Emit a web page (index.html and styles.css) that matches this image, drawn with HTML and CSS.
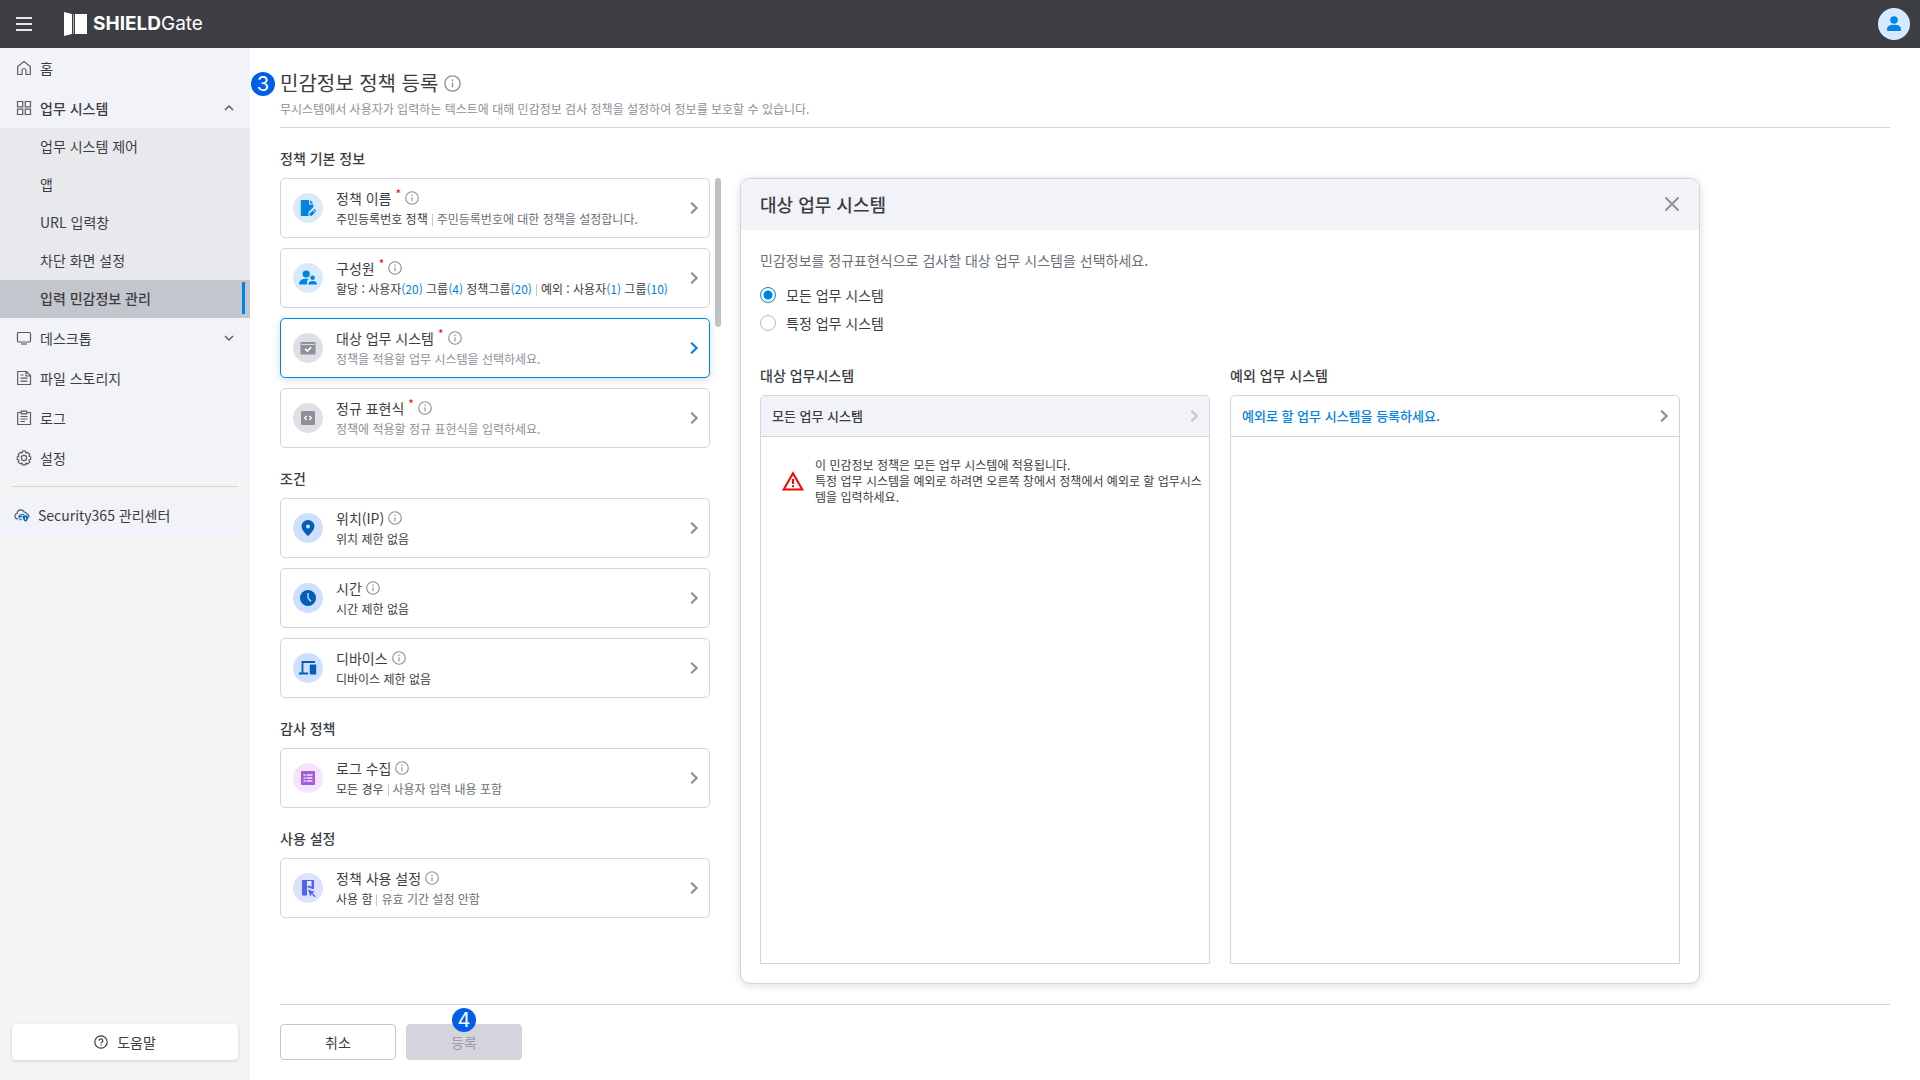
FILE: index.html
```html
<!DOCTYPE html>
<html lang="ko">
<head>
<meta charset="utf-8">
<meta name="viewport" content="width=device-width, initial-scale=1">
<title>SHIELDGate - 민감정보 정책 등록</title>
<link rel="stylesheet" href="styles.css">
</head>
<body>
<svg class="sprite" aria-hidden="true">
  <symbol id="i-info" viewBox="0 0 16 16"><circle cx="8" cy="8" r="7.2" fill="none" stroke="currentColor" stroke-width="1.3"/><path d="M8 7v4.6" stroke="currentColor" stroke-width="1.3"/><circle cx="8" cy="4.8" r=".9" fill="currentColor"/></symbol>
  <symbol id="i-next" viewBox="0 0 12 12"><path d="M3.2 .8L8.600 6l-5.400 5.200" fill="none" stroke="currentColor" stroke-width="2.2"/></symbol>
</svg>

<header class="topbar">
  <button class="menu-btn" type="button" aria-label="메뉴">
    <svg width="16" height="14" viewBox="0 0 16 14"><path d="M0 1h16M0 7h16M0 13h16" stroke="#e4e5e8" stroke-width="2"/></svg>
  </button>
  <a class="logo" href="#">
    <svg width="24" height="24" viewBox="0 0 24 24"><path d="M0 0l8 2v20l-8 2z" fill="#fff"/><path d="M9 2h1v20H9z" fill="#a9abb0"/><path d="M11 2h12v20H11z" fill="#fff"/></svg>
    <span class="logo-text"><b>SHIELD</b>Gate</span>
  </a>
  <button class="avatar" type="button" aria-label="내 계정">
    <svg width="16" height="16" viewBox="0 0 16 16" fill="#0083e6"><circle cx="8" cy="4" r="3.8"/><path d="M1 14c-.3-4 3-5.300 7-5.300s7.300 1.300 7 5.300c0 .7-.4 1-1 1H2c-.6 0-1-.3-1-1z"/></svg>
  </button>
</header>

<div class="shell">
  <aside class="sidebar">
    <nav class="menu">
      <a class="item" href="#"><svg class="ico" viewBox="0 0 16 16"><path d="M1.700 6.500L8 1.500l6.300 5V14.500H10V10.500a2 2 0 0 0-4 0v4H1.700z"/></svg>홈</a>
      <button class="item open" type="button" aria-expanded="true"><svg class="ico" viewBox="0 0 16 16"><path d="M1.500 1.500h5.300v5.300H1.500zM9.200 1.500h5.300v5.300H9.200zM1.500 9.200h5.300v5.300H1.500zM9.200 9.200h5.300v5.300H9.200z"/></svg>업무 시스템<svg class="fold" viewBox="0 0 10 10"><path d="M1 7l4-4 4 4"/></svg></button>
      <div class="submenu">
        <a href="#">업무 시스템 제어</a>
        <a href="#">앱</a>
        <a href="#">URL 입력창</a>
        <a href="#">차단 화면 설정</a>
        <a class="current" href="#" aria-current="page">입력 민감정보 관리</a>
      </div>
      <button class="item" type="button" aria-expanded="false"><svg class="ico" viewBox="0 0 16 16"><rect x="1.500" y="2.500" width="13" height="9.500" rx="1"/><path d="M5 14h6"/></svg>데스크톱<svg class="fold" viewBox="0 0 10 10"><path d="M1 3l4 4 4-4"/></svg></button>
      <a class="item" href="#"><svg class="ico" viewBox="0 0 16 16"><path d="M1.700 1.500H10.500L14.500 5.500V14.500H1.700zM10 1.500V6h4.500M4.500 5h3M4.500 8.200h7M4.500 11.200h7"/></svg>파일 스토리지</a>
      <a class="item" href="#"><svg class="ico" viewBox="0 0 16 16"><path d="M5 2.500H1.700v12h12.800v-12H11M5.200 1.200h5.600v2.600H5.200zM4.500 6.500h7M4.500 9h7M4.500 11.500h4.500"/></svg>로그</a>
      <a class="item" href="#"><svg class="ico" viewBox="0 0 16 16"><circle cx="8" cy="8" r="2.600"/><path d="M6.500 1.200h3l.5 1.800 1.800-.6 2 2.100-.8 1.700 1.700.6v2.400l-1.700.8.7 1.800-2 2.100-1.700-.8-.6 1.700H6.500L6 13.100l-1.800.8-2-2.100.8-1.700-1.700-.6V6.900L3 6.200l-.8-1.700 2-2.100L6 3z"/></svg>설정</a>
    </nav>
    <hr class="menu-line">
    <a class="center-link" href="#"><svg width="16" height="16" viewBox="0 0 16 16" fill="none"><path d="M4 11.800H3a2.700 2.700 0 0 1 .2-5.300A3.600 3.600 0 0 1 10 4.800a3 3 0 0 1 2.800 2.300 2.400 2.400 0 0 1 1.900 3.500" stroke="#4d5f7c" stroke-width="1.200"/><path d="M4.500 9.800c1.500-2.600 4-3 6-1.500M4.800 11.600c1-2 2.500-2.500 4-1.800M5.500 13.300c.6-1 1.300-1.400 2.200-1.200" stroke="#0a6fc7" stroke-width="1.200"/><path d="M8.800 9.200l2.700-.9 2.700.9c.2 2.800-.8 4.600-2.700 5.500-1.900-.9-2.900-2.700-2.700-5.500z" fill="#0a6fc7"/><path d="M11.500 10.500v2.200" stroke="#fff"/></svg>Security365 관리센터</a>
    <button class="help" type="button"><svg width="14" height="14" viewBox="0 0 14 14" fill="none" stroke="#3c3d42" stroke-width="1.200"><circle cx="7" cy="7" r="6.200"/><path d="M5.200 5.700a1.800 1.800 0 1 1 2.600 1.600c-.6.300-.8.600-.8 1.200M7 9.600v1.200"/></svg>도움말</button>
  </aside>

  <main class="main">
    <header class="page-head">
      <h1>민감정보 정책 등록 <svg class="info-lg"><use href="#i-info"/></svg></h1>
      <p>무시스템에서 사용자가 입력하는 텍스트에 대해 민감정보 검사 정책을 설정하여 정보를 보호할 수 있습니다.</p>
      <span class="step step-title">3</span>
    </header>

    <div class="work">
      <div class="policy">
        <section>
          <h2>정책 기본 정보</h2>
          <button class="card" type="button">
            <span class="disc sky"><svg width="16" height="16" viewBox="0 0 16 16" fill="#0083e6"><path d="M1.500 0H9v4.500h4.300v2.800L8.500 12v4H1.500A1 1 0 0 1 .8 15.300V.7A1 1 0 0 1 1.500 0z"/><path d="M10 0l3.300 3.500H10zM9.600 15.800v-2.200l3.200-3.200 2.200 2.200-3.200 3.200zM13.500 9.700l.9-.9 2.200 2.200-.9.9z"/></svg></span>
            <span class="text"><span class="name">정책 이름<i>*</i><svg class="info"><use href="#i-info"/></svg></span>
            <span class="desc"><span>주민등록번호 정책</span><span class="soft">주민등록번호에 대한 정책을 설정합니다.</span></span></span>
            <svg class="next"><use href="#i-next"/></svg>
          </button>
          <button class="card" type="button">
            <span class="disc sky"><svg width="18" height="18" viewBox="0 0 18 18" fill="#0083e6"><circle cx="7.200" cy="5" r="3.600"/><path d="M0 15.500c0-4 3-5.800 7-5.800 1 0 1.800.1 2.500.3-1.300 1-1.800 2.800-1.500 5.500z"/><circle cx="13.600" cy="8.800" r="2.300"/><path d="M9.200 15.500c0-2.600 1.800-3.600 4.400-3.600s4.400 1 4.400 3.600z"/></svg></span>
            <span class="text"><span class="name">구성원<i>*</i><svg class="info"><use href="#i-info"/></svg></span>
            <span class="desc"><span>할당 : 사용자<em>(20)</em> 그룹<em>(4)</em> 정책그룹<em>(20)</em></span><span>예외 : 사용자<em>(1)</em> 그룹<em>(10)</em></span></span></span>
            <svg class="next"><use href="#i-next"/></svg>
          </button>
          <button class="card active" type="button">
            <span class="disc gray"><svg width="16" height="16" viewBox="0 0 16 16"><path d="M1.500 2h13a1 1 0 0 1 1 1v10.500a1 1 0 0 1-1 1h-13a1 1 0 0 1-1-1V3a1 1 0 0 1 1-1z" fill="#8d9099"/><path d="M1.500 4.400h13" stroke="#dfe0e4"/><path d="M5 8.800l2.300 2.300 4-4" fill="none" stroke="#fff" stroke-width="1.500"/></svg></span>
            <span class="text"><span class="name">대상 업무 시스템<i>*</i><svg class="info"><use href="#i-info"/></svg></span>
            <span class="desc"><span class="faint">정책을 적용할 업무 시스템을 선택하세요.</span></span></span>
            <svg class="next"><use href="#i-next"/></svg>
          </button>
          <button class="card" type="button">
            <span class="disc gray"><svg width="14" height="14" viewBox="0 0 14 14"><rect width="14" height="14" rx="1" fill="#8d9099"/><path d="M5.600 5L3.600 7l2 2M8.400 5l2 2-2 2" fill="none" stroke="#fff" stroke-width="1.200"/></svg></span>
            <span class="text"><span class="name">정규 표현식<i>*</i><svg class="info"><use href="#i-info"/></svg></span>
            <span class="desc"><span class="faint">정책에 적용할 정규 표현식을 입력하세요.</span></span></span>
            <svg class="next"><use href="#i-next"/></svg>
          </button>
        </section>

        <section>
          <h2>조건</h2>
          <button class="card" type="button">
            <span class="disc blue"><svg width="16" height="16" viewBox="0 0 16 16"><path d="M8 0a6.400 6.400 0 0 1 6.400 6.400C14.400 10.500 8 16 8 16S1.600 10.500 1.600 6.400A6.400 6.400 0 0 1 8 0z" fill="#005fb8"/><circle cx="8" cy="6.500" r="2" fill="#cfe0ff"/></svg></span>
            <span class="text"><span class="name">위치(IP)<svg class="info"><use href="#i-info"/></svg></span>
            <span class="desc"><span>위치 제한 없음</span></span></span>
            <svg class="next"><use href="#i-next"/></svg>
          </button>
          <button class="card" type="button">
            <span class="disc blue"><svg width="16" height="16" viewBox="0 0 16 16"><circle cx="8" cy="8" r="8" fill="#005fb8"/><path d="M8 3v5l3 3.500" fill="none" stroke="#cfe0ff" stroke-width="1.300"/></svg></span>
            <span class="text"><span class="name">시간<svg class="info"><use href="#i-info"/></svg></span>
            <span class="desc"><span>시간 제한 없음</span></span></span>
            <svg class="next"><use href="#i-next"/></svg>
          </button>
          <button class="card" type="button">
            <span class="disc blue"><svg width="18" height="16" viewBox="0 0 18 16"><path d="M16 2H3.500v11.500M0 13.500h9" fill="none" stroke="#005fb8" stroke-width="1.800"/><rect x="10.800" y="4.500" width="6.400" height="10" rx=".6" fill="#005fb8"/></svg></span>
            <span class="text"><span class="name">디바이스<svg class="info"><use href="#i-info"/></svg></span>
            <span class="desc"><span>디바이스 제한 없음</span></span></span>
            <svg class="next"><use href="#i-next"/></svg>
          </button>
        </section>

        <section>
          <h2>감사 정책</h2>
          <button class="card" type="button">
            <span class="disc pink"><svg width="14" height="14" viewBox="0 0 14 14"><rect width="14" height="14" rx="1" fill="#a35bd6"/><path d="M2.500 4h2M2.500 7h2M2.500 10h2M5.500 4h6M5.500 7h6M5.500 10h6" stroke="#f5e4ff" stroke-width="1.300"/></svg></span>
            <span class="text"><span class="name">로그 수집<svg class="info"><use href="#i-info"/></svg></span>
            <span class="desc"><span>모든 경우</span><span class="soft">사용자 입력 내용 포함</span></span></span>
            <svg class="next"><use href="#i-next"/></svg>
          </button>
        </section>

        <section>
          <h2>사용 설정</h2>
          <button class="card" type="button">
            <span class="disc violet"><svg width="16" height="18" viewBox="0 0 16 18"><path d="M3 1h10a1 1 0 0 1 1 1v8.500L7 8v8.500H3a1 1 0 0 1-1-1V2a1 1 0 0 1 1-1z" fill="#4f63ee"/><path d="M7 2h4.500v6L9.200 6.200 7 8z" fill="#e8ecff"/><path d="M8 10.500l7 2.400-2.600 1.200 3.300 3.200-1 1-3.200-3.200-1.200 2.400z" fill="#4f63ee"/></svg></span>
            <span class="text"><span class="name">정책 사용 설정<svg class="info"><use href="#i-info"/></svg></span>
            <span class="desc"><span>사용 함</span><span class="soft">유효 기간 설정 안함</span></span></span>
            <svg class="next"><use href="#i-next"/></svg>
          </button>
        </section>
      </div>
      <div class="track"><div class="thumb"></div></div>

      <section class="panel">
        <header class="panel-head">
          <h2>대상 업무 시스템</h2>
          <button class="close" type="button" aria-label="닫기"><svg width="14" height="14" viewBox="0 0 14 14"><path d="M1 1l12 12M13 1L1 13" stroke="#8d9099" stroke-width="2" stroke-linecap="round"/></svg></button>
        </header>
        <div class="panel-body">
          <fieldset class="choice">
            <legend>민감정보를 정규표현식으로 검사할 대상 업무 시스템을 선택하세요.</legend>
            <label><input type="radio" name="target" checked>모든 업무 시스템</label>
            <label><input type="radio" name="target">특정 업무 시스템</label>
          </fieldset>
          <div class="lists">
            <div class="list">
              <h3>대상 업무시스템</h3>
              <div class="box">
                <button class="box-head" type="button" disabled>모든 업무 시스템<svg class="next"><use href="#i-next"/></svg></button>
                <div class="notice">
                  <svg width="22" height="20" viewBox="0 0 22 20"><path d="M11 2.200L20.300 18.500H1.700z" fill="none" stroke="#f00" stroke-width="2"/><path d="M11 8v5M11 14.200v2" stroke="#f00" stroke-width="2"/></svg>
                  <p>이 민감정보 정책은 모든 업무 시스템에 적용됩니다.<br>특정 업무 시스템을 예외로 하려면 오른쪽 창에서 정책에서 예외로 할 업무시스템을 입력하세요.</p>
                </div>
              </div>
            </div>
            <div class="list">
              <h3>예외 업무 시스템</h3>
              <div class="box">
                <button class="box-head add" type="button">예외로 할 업무 시스템을 등록하세요.<svg class="next"><use href="#i-next"/></svg></button>
              </div>
            </div>
          </div>
        </div>
      </section>
    </div>

    <footer class="actions">
      <button class="btn" type="button">취소</button>
      <div class="btn-wrap">
        <button class="btn" type="submit" disabled>등록</button>
        <span class="step step-submit">4</span>
      </div>
    </footer>
  </main>
</div>
</body>
</html>
```
FILE: styles.css
```css
* { box-sizing: border-box; }

body {
  margin: 0;
  min-height: 100vh;
  display: flex;
  flex-direction: column;
  font-family: "Noto Sans CJK KR", "Noto Sans", sans-serif;
  font-size: 14px;
  line-height: 20px;
  color: #3c3d42;
  background: #fff;
}

h1, h2, h3, p { margin: 0; }
button { font: inherit; color: inherit; border: 0; padding: 0; background: none; text-align: left; }
a { color: inherit; text-decoration: none; }
svg { display: block; flex: none; }
.sprite { position: absolute; width: 0; height: 0; }

/* top bar */
.topbar {
  height: 48px;
  display: flex;
  align-items: center;
  padding: 0 10px 0 16px;
  background: #3c3e43;
}
.logo { display: flex; align-items: center; gap: 5px; margin-left: 32px; }
.logo-text { font-family: Inter, sans-serif; font-size: 19px; color: #fff; }
.logo-text b { font-weight: 700; }
.avatar {
  width: 32px;
  height: 32px;
  margin-left: auto;
  display: grid;
  place-items: center;
  border-radius: 50%;
  background: #d6eaff;
}

.shell { flex: 1; display: flex; }

/* sidebar */
.sidebar {
  flex: none;
  width: 250px;
  display: flex;
  flex-direction: column;
  padding-bottom: 20px;
  background: #f4f4f4;
}
.menu { background: #f1f3f8; }
.item {
  width: 100%;
  height: 40px;
  display: flex;
  align-items: center;
  gap: 8px;
  padding: 0 16px;
}
.item.open { font-weight: 500; }
.ico { width: 16px; height: 16px; fill: none; stroke: #5b5d63; stroke-width: 1.2; }
.fold { width: 10px; height: 10px; margin-left: auto; fill: none; stroke: #5b5d63; stroke-width: 1.5; }
.submenu { background: #e8e9ed; }
.submenu a {
  height: 38px;
  display: flex;
  align-items: center;
  padding: 0 5px 2px 40px;
}
.submenu .current {
  justify-content: space-between;
  font-weight: 500;
  background: #c4c6cd;
}
.current::after { content: ""; width: 3px; height: 32px; background: #0083e6; }
.menu-line { width: auto; height: 1px; margin: 8px 12px; border: 0; background: #d3d4dc; }
.center-link {
  height: 40px;
  display: flex;
  align-items: center;
  gap: 8px;
  padding: 0 14px;
  background: #f1f3f8;
}
.help {
  height: 36px;
  margin: auto 12px 0;
  display: flex;
  align-items: center;
  justify-content: center;
  gap: 9px;
  border-radius: 4px;
  background: #fff;
  box-shadow: 0 1px 3px rgba(0, 0, 0, .15);
}

/* page */
.main {
  flex: 1;
  min-width: 0;
  display: flex;
  flex-direction: column;
  padding: 21px 30px 20px;
}
.page-head {
  position: relative;
  padding-bottom: 8px;
  border-bottom: 1px solid #d3d4d9;
}
.page-head h1 {
  display: flex;
  align-items: center;
  gap: 6px;
  margin-bottom: 2px;
  font-size: 20px;
  line-height: 28px;
  font-weight: 400;
}
.page-head p { font-size: 12px; color: #8d9099; }
.info-lg { width: 17px; height: 17px; color: #8d9099; }
.step {
  position: absolute;
  width: 24px;
  height: 24px;
  border-radius: 50%;
  background: #005ee9;
  color: #fff;
  font-family: Inter, sans-serif;
  font-size: 20px;
  line-height: 24px;
  text-align: center;
}
.step-title { left: -29px; top: 3px; }
.step-submit { left: 46px; top: -16px; }

.work { flex: 1; display: flex; padding-bottom: 20px; }
.policy { flex: 0 1 430px; }
.policy section { display: flex; flex-direction: column; gap: 10px; }
.policy h2 {
  padding-top: 20px;
  font-size: 14px;
  font-weight: 500;
}
.card {
  height: 60px;
  display: flex;
  align-items: center;
  padding: 0 9px 0 12px;
  border: 1px solid #d3d4dc;
  border-radius: 5px;
  background: #fff;
}
.card.active { border-color: #0083e6; box-shadow: 0 2px 8px rgba(60, 80, 160, .2); }
.disc {
  flex: none;
  width: 30px;
  height: 30px;
  margin-right: 13px;
  display: grid;
  place-items: center;
  border-radius: 50%;
}
.sky { background: #d9ebfb; }
.gray { background: #dfe0e4; }
.blue { background: #cfe0ff; }
.pink { background: #f5e4ff; }
.violet { background: #dce1ff; }
.text { padding-top: 1px; }
.name { display: flex; align-items: center; gap: 4px; }
.name i { color: #f00; font-size: 12px; font-style: normal; line-height: 12px; align-self: flex-start; }
.info { width: 14px; height: 14px; color: #8d9099; }
.desc { display: flex; align-items: center; margin-top: 1px; font-size: 12px; }
.desc span + span::before {
  content: "";
  display: inline-block;
  width: 1px;
  height: 12px;
  margin: 0 4px;
  vertical-align: -2px;
  background: #c4c6cd;
}
.desc em { font-style: normal; color: #0083e6; }
.soft { color: #6b6e78; }
.faint { color: #8d9099; }
.next { width: 12px; height: 12px; margin-left: auto; color: #8d9099; }
.active .next { color: #0083e6; }

.track { flex: none; width: 6px; margin: 50px 19px 0 5px; }
.thumb { height: 149px; border-radius: 3px; background: #c1c2c4; }

/* detail panel */
.panel {
  flex: 1;
  max-width: 960px;
  display: flex;
  flex-direction: column;
  margin-top: 50px;
  border: 1px solid #d3d4dc;
  border-radius: 10px;
  background: #fff;
  box-shadow: 0 1px 8px rgba(0, 0, 0, .15);
  overflow: hidden;
}
.panel-head {
  height: 51px;
  display: flex;
  align-items: center;
  justify-content: space-between;
  padding: 0 20px 2px 19px;
  background: #f1f3f8;
}
.panel-head h2 { font-size: 18px; font-weight: 500; }
.panel-body { flex: 1; display: flex; flex-direction: column; padding: 20px 19px 19px; }
.choice { margin: 0; padding: 0; border: 0; display: flex; flex-direction: column; }
.choice legend { padding: 0; margin-bottom: 11px; color: #6b6e78; }
.choice label { display: flex; align-items: center; gap: 10px; height: 28px; }
.choice input {
  appearance: none;
  width: 16px;
  height: 16px;
  margin: 0;
  border: 1px solid #b4b6bc;
  border-radius: 50%;
  background: #fff;
}
.choice input:checked { border-color: #0083e6; background: radial-gradient(circle, #0083e6 4px, #fff 5px); }
.lists { flex: 1; display: flex; gap: 20px; margin-top: 28px; }
.list { flex: 1; display: flex; flex-direction: column; gap: 10px; }
.list h3 { font-size: 14px; font-weight: 500; }
.box { flex: 1; border: 1px solid #d3d4dc; border-radius: 5px 5px 0 0; overflow: hidden; }
.box-head {
  width: 100%;
  height: 41px;
  display: flex;
  align-items: center;
  padding: 0 9px 0 11px;
  border-bottom: 1px solid #d3d4dc;
  font-size: 13px;
  font-weight: 500;
}
.box-head:disabled { background: #f1f3f8; }
.box-head:disabled .next { color: #c4c6cd; }
.box-head.add { color: #0083e6; }
.notice { display: flex; align-items: center; gap: 11px; padding: 20px 4px 0 21px; }
.notice p { font-size: 12px; line-height: 16px; word-break: break-all; }

/* actions */
.actions { display: flex; gap: 10px; padding-top: 19px; border-top: 1px solid #d3d4dc; }
.btn-wrap { position: relative; }
.btn {
  width: 116px;
  height: 36px;
  border: 1px solid #c4c6cd;
  border-radius: 4px;
  background: #fff;
  text-align: center;
}
.btn:disabled { border-color: #d3d4dc; background: #d3d4dc; color: #9b9da5; }
```
